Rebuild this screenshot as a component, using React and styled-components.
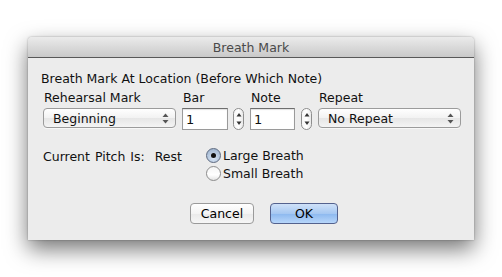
import styled, { createGlobalStyle } from 'styled-components'

const Global = createGlobalStyle`
  html, body { margin: 0; padding: 0; background: #ffffff; }
  body { font-family: "DejaVu Sans", "Liberation Sans", sans-serif; }
`

const Page = styled.div`
  width: 502px;
  height: 277px;
  padding: 37px 0 0 28px;
  box-sizing: border-box;
  overflow: hidden;
`

const Window = styled.div`
  width: 446px;
  height: 203px;
  background: #ececec;
  border-radius: 4px 4px 0 0;
  box-shadow: 0 9px 22px rgba(0, 0, 0, 0.55), 0 0 2px rgba(0, 0, 0, 0.35);
  display: flex;
  flex-direction: column;
`

const TitleBar = styled.div`
  height: 20px;
  border-bottom: 1px solid #585858;
  border-radius: 4px 4px 0 0;
  background: linear-gradient(#ebebeb, #c9c9c9);
  color: #4a4a4a;
  font-size: 12.5px;
  display: flex;
  align-items: center;
  justify-content: center;
`

const Body = styled.div`
  padding: 13px 13px 0 13px;
  font-size: 12.5px;
  color: #111;
`

const Heading = styled.div`
  height: 16px;
  line-height: 16px;
`

const FieldRow = styled.div`
  display: flex;
  align-items: flex-end;
  margin: 3px 0 0 2px;
`

const Column = styled.div`
  display: flex;
  flex-direction: column;
  margin-left: ${p => p.$gap || 0}px;
`

const Label = styled.div`
  height: 15px;
  line-height: 15px;
  padding-left: 1px;
  margin-bottom: 3px;
`

const Popup = styled.div`
  width: ${p => p.$w}px;
  height: 20px;
  box-sizing: border-box;
  border: 1px solid #9b9b9b;
  border-radius: 4px;
  background: linear-gradient(#ffffff, #f2f2f2 50%, #e6e6e6 51%, #f4f4f4);
  box-shadow: 0 1px 0 rgba(255, 255, 255, 0.6);
  display: flex;
  align-items: center;
  justify-content: space-between;
  padding: 0 6px 0 9px;
  margin-bottom: 2px;
`

const Arrows = styled.svg`
  width: 7px;
  height: 11px;
`

const TextField = styled.div`
  width: ${p => p.$w}px;
  height: 22px;
  box-sizing: border-box;
  background: #fff;
  border: 1px solid #9a9a9a;
  border-top-color: #6e6e6e;
  box-shadow: inset 0 1px 1px rgba(0, 0, 0, 0.12);
  padding: 2px 0 0 3px;
  font-size: 13px;
  line-height: 17px;
`

const Stepper = styled.div`
  width: 12px;
  height: 22px;
  box-sizing: border-box;
  border: 1px solid #8e8e8e;
  border-radius: 6px;
  background: linear-gradient(90deg, #f6f6f6, #ffffff 50%, #e9e9e9);
  display: flex;
  align-items: center;
  justify-content: center;
  margin-left: ${p => p.$gap}px;
`

const PitchRow = styled.div`
  display: flex;
  margin: 18px 0 0 2px;
`

const Pitch = styled.div`
  width: 163px;
  padding-top: 1px;
  line-height: 15px;
  word-spacing: 1px;
`

const Radios = styled.div`
  display: flex;
  flex-direction: column;
  gap: 3px;
`

const RadioItem = styled.div`
  display: flex;
  align-items: center;
  gap: 2px;
  height: 15px;
`

const RadioDot = styled.div`
  width: 15px;
  height: 15px;
  box-sizing: border-box;
  border-radius: 50%;
  border: 1px solid ${p => (p.$on ? '#5d6a80' : '#8c8c8c')};
  background: ${p =>
    p.$on
      ? 'radial-gradient(circle at 50% 70%, #d9e6f6, #a9bdd6 70%, #93a8c4)'
      : 'linear-gradient(#f4f4f4, #ffffff 60%, #e4e4e4)'};
  display: flex;
  align-items: center;
  justify-content: center;
  &::after {
    content: '';
    width: 5px;
    height: 5px;
    border-radius: 50%;
    background: #111;
    display: ${p => (p.$on ? 'block' : 'none')};
  }
`

const Buttons = styled.div`
  display: flex;
  gap: 16px;
  margin: 22px 0 0 149px;
`

const Button = styled.div`
  width: ${p => p.$w}px;
  height: 21px;
  box-sizing: border-box;
  border-radius: 4px;
  border: 1px solid ${p => (p.$primary ? '#54628e' : '#9a9a9a')};
  background: ${p =>
    p.$primary
      ? 'linear-gradient(#cfe1f8, #a6c8f2 50%, #8cb8ef 51%, #b7d6fa)'
      : 'linear-gradient(#ffffff, #f3f3f3 50%, #e9e9e9 51%, #f6f6f6)'};
  display: flex;
  align-items: center;
  justify-content: center;
  font-size: 12.5px;
  color: #000;
`

const PopupArrows = () => (
  <Arrows viewBox="0 0 7 11">
    <path d="M3.5 0.5 L6.5 4 L0.5 4 Z" fill="#555" />
    <path d="M3.5 10.5 L6.5 7 L0.5 7 Z" fill="#555" />
  </Arrows>
)

const StepArrows = () => (
  <svg width="6" height="14" viewBox="0 0 6 14">
    <path d="M3 1 L5.5 4.5 L0.5 4.5 Z" fill="#333" />
    <path d="M3 13 L5.5 9.5 L0.5 9.5 Z" fill="#333" />
  </svg>
)

export default function App() {
  return (
    <Page>
      <Global />
      <Window>
        <TitleBar>Breath Mark</TitleBar>
        <Body>
          <Heading>Breath Mark At Location (Before Which Note)</Heading>
          <FieldRow>
            <Column>
              <Label>Rehearsal Mark</Label>
              <Popup $w={133}>
                Beginning
                <PopupArrows />
              </Popup>
            </Column>
            <Column $gap={6}>
              <Label>Bar</Label>
              <TextField $w={46}>1</TextField>
            </Column>
            <Stepper $gap={5}>
              <StepArrows />
            </Stepper>
            <Column $gap={6}>
              <Label>Note</Label>
              <TextField $w={45}>1</TextField>
            </Column>
            <Stepper $gap={6}>
              <StepArrows />
            </Stepper>
            <Column $gap={6}>
              <Label>Repeat</Label>
              <Popup $w={143}>
                No Repeat
                <PopupArrows />
              </Popup>
            </Column>
          </FieldRow>
          <PitchRow>
            <Pitch>Current Pitch Is:&nbsp; Rest</Pitch>
            <Radios>
              <RadioItem>
                <RadioDot $on />
                Large Breath
              </RadioItem>
              <RadioItem>
                <RadioDot />
                Small Breath
              </RadioItem>
            </Radios>
          </PitchRow>
          <Buttons>
            <Button $w={64}>Cancel</Button>
            <Button $w={68} $primary>OK</Button>
          </Buttons>
        </Body>
      </Window>
    </Page>
  )
}
